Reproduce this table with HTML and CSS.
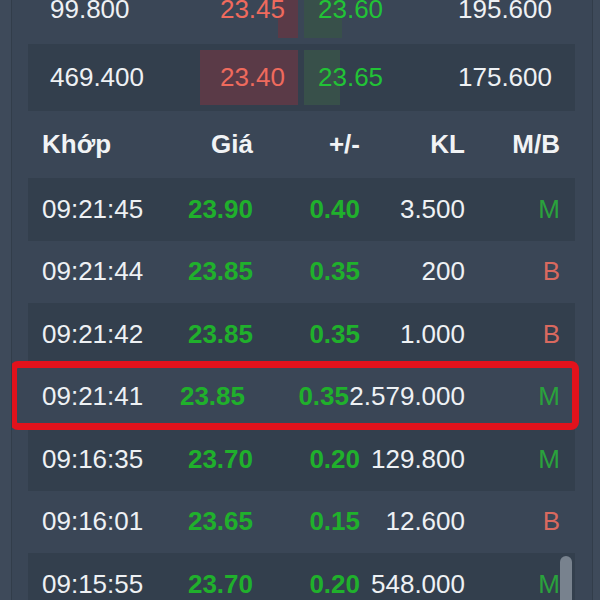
FILE: index.html
```html
<!DOCTYPE html>
<html lang="vi">
<head>
<meta charset="utf-8">
<title>Khớp lệnh</title>
<link rel="stylesheet" href="styles.css">
</head>
<body>
<div class="panel">
  <div class="book">
    <div class="book-row first">
      <div class="vol-left">99.800</div>
      <div class="bid" style="--w:20px">23.45</div>
      <div class="ask" style="--w:38px">23.60</div>
      <div class="vol-right">195.600</div>
    </div>
    <div class="book-row dark">
      <div class="vol-left">469.400</div>
      <div class="bid" style="--w:98px">23.40</div>
      <div class="ask" style="--w:36px">23.65</div>
      <div class="vol-right">175.600</div>
    </div>
  </div>
  <div class="trades">
    <div class="trade-row head">
      <div class="c-time">Khớp</div>
      <div class="c-num">Giá</div>
      <div class="c-num">+/-</div>
      <div class="c-num">KL</div>
      <div class="c-num">M/B</div>
    </div>
    <div class="trade-row dark">
      <div class="c-time">09:21:45</div>
      <div class="c-num up">23.90</div>
      <div class="c-num up">0.40</div>
      <div class="c-num">3.500</div>
      <div class="c-num side-m">M</div>
    </div>
    <div class="trade-row">
      <div class="c-time">09:21:44</div>
      <div class="c-num up">23.85</div>
      <div class="c-num up">0.35</div>
      <div class="c-num">200</div>
      <div class="c-num side-b">B</div>
    </div>
    <div class="trade-row dark">
      <div class="c-time">09:21:42</div>
      <div class="c-num up">23.85</div>
      <div class="c-num up">0.35</div>
      <div class="c-num">1.000</div>
      <div class="c-num side-b">B</div>
    </div>
    <div class="trade-row wide">
      <div class="c-time">09:21:41</div>
      <div class="c-num up">23.85</div>
      <div class="c-num up">0.35</div>
      <div class="c-num">2.579.000</div>
      <div class="c-num side-m">M</div>
    </div>
    <div class="trade-row dark">
      <div class="c-time">09:16:35</div>
      <div class="c-num up">23.70</div>
      <div class="c-num up">0.20</div>
      <div class="c-num">129.800</div>
      <div class="c-num side-m">M</div>
    </div>
    <div class="trade-row">
      <div class="c-time">09:16:01</div>
      <div class="c-num up">23.65</div>
      <div class="c-num up">0.15</div>
      <div class="c-num">12.600</div>
      <div class="c-num side-b">B</div>
    </div>
    <div class="trade-row dark">
      <div class="c-time">09:15:55</div>
      <div class="c-num up">23.70</div>
      <div class="c-num up">0.20</div>
      <div class="c-num">548.000</div>
      <div class="c-num side-m">M</div>
    </div>
  </div>
  <div class="highlight"></div>
  <div class="scroll-thumb"></div>
</div>
</body>
</html>
```

FILE: styles.css
```css
html, body {
  margin: 0;
  padding: 0;
}

body {
  width: 600px;
  height: 600px;
  overflow: hidden;
  background: #3e4a5a;
  font-family: "Liberation Sans", Arial, sans-serif;
  color: #eef1f4;
}

.panel {
  position: relative;
  margin-left: 11px;
  width: 547px;
  height: 600px;
  padding: 0 17px 0 16px;
  background: #3a4656;
  border-left: 1px solid #323d4a;
  border-right: 1px solid #323d4a;
  overflow: hidden;
}

.book {
  margin-top: -26px;
}

.book-row {
  display: grid;
  grid-template-columns: 148px 100px 106px 148px;
  padding: 0 23px 0 22px;
  height: 70px;
  align-items: stretch;
  font-size: 26px;
}

.book-row.dark {
  height: 67px;
}

.dark {
  background: #333f4d;
}

.vol-left,
.vol-right,
.bid,
.ask {
  display: flex;
  align-items: center;
}

.vol-left {
  justify-content: flex-start;
}

.vol-right {
  justify-content: flex-end;
}

.bid {
  justify-content: flex-end;
  padding-right: 13px;
  margin: 6px 0;
  color: #ef6a5d;
  background: linear-gradient(to left, #5a3a47 var(--w), transparent var(--w));
}

.ask {
  justify-content: flex-start;
  padding-left: 14px;
  margin: 6px 0 6px 6px;
  color: #22c336;
  background: linear-gradient(to right, #38504a var(--w), transparent var(--w));
}

.trade-row {
  display: grid;
  grid-template-columns: 130px 81px 107px 105px 95px;
  padding: 0 15px 0 14px;
  height: 62.5px;
  align-items: center;
  font-size: 26px;
}

.trade-row.wide {
  grid-template-columns: 130px 73px 104px 116px 95px;
}

.trade-row.head {
  height: 67px;
  font-weight: bold;
  color: #f1f3f5;
}

.c-time {
  text-align: left;
}

.c-num {
  text-align: right;
}

.up {
  color: #20b02c;
  font-weight: bold;
}

.side-m {
  color: #2aa23c;
}

.side-b {
  color: #d9695f;
}

.highlight {
  position: absolute;
  left: -2px;
  top: 361px;
  width: 569px;
  height: 69px;
  box-sizing: border-box;
  border: 7px solid #e2121c;
  border-radius: 8px;
}

.scroll-thumb {
  position: absolute;
  left: 548px;
  top: 556px;
  width: 12px;
  height: 70px;
  border-radius: 6px;
  background: #78828e;
}
```
